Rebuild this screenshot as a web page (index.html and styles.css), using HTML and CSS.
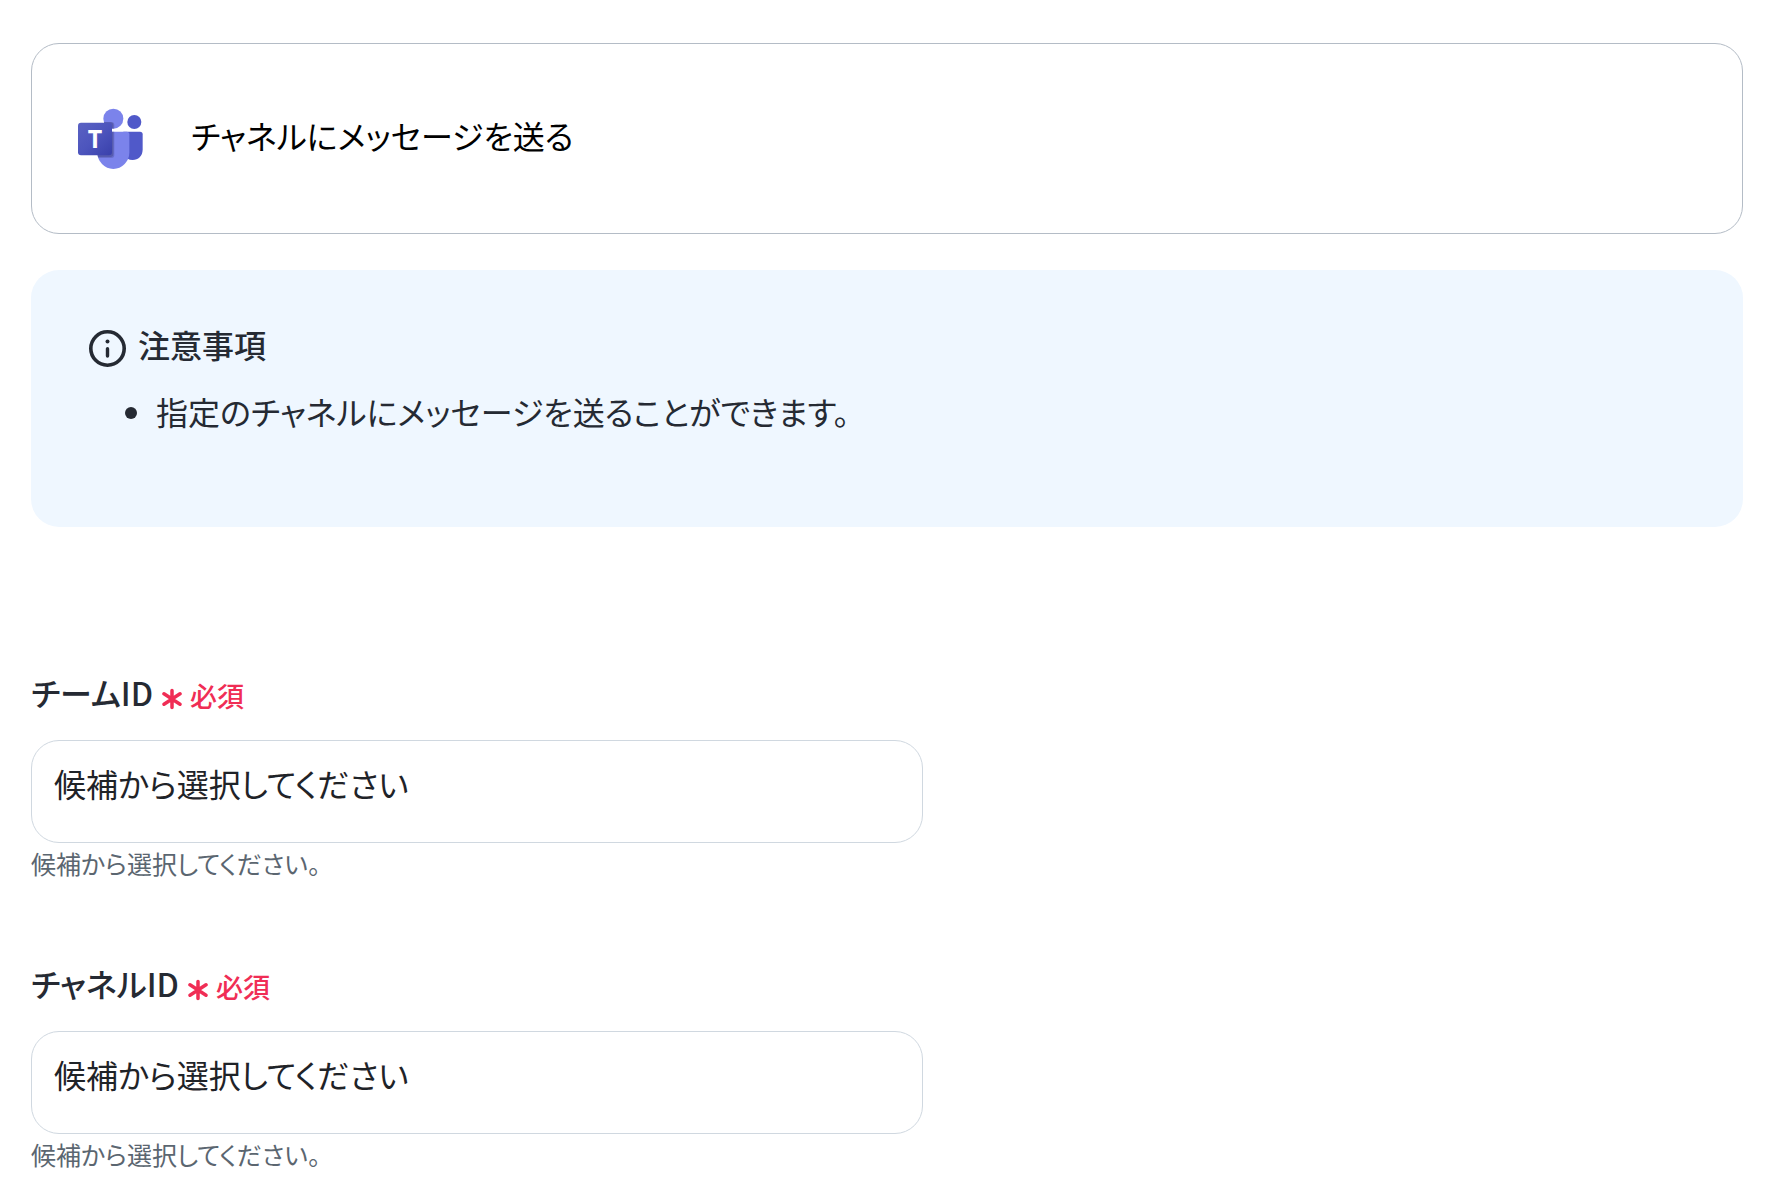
FILE: index.html
```html
<!DOCTYPE html>
<html lang="ja">
<head>
<meta charset="utf-8">
<meta name="viewport" content="width=device-width, initial-scale=1">
<title>チャネルにメッセージを送る</title>
<link rel="stylesheet" href="styles.css">
</head>
<body>
<main class="page">
  <header class="card">
    <svg class="card-logo" viewBox="24 24 198 186" role="img" aria-label="Microsoft Teams">
      <defs>
        <linearGradient id="tile" x1="0" y1="0" x2="1" y2="1">
          <stop offset="0" stop-color="#5a62c3"/>
          <stop offset="0.5" stop-color="#4d55bd"/>
          <stop offset="1" stop-color="#3940ab"/>
        </linearGradient>
        <clipPath id="figure">
          <circle cx="130" cy="56" r="30"/>
          <path d="M88 95H170q8 0 8 8v54a48 50 0 0 1-96 0V95z"/>
        </clipPath>
      </defs>
      <circle cx="193" cy="66" r="21" fill="#5059c9"/>
      <path d="M160 95h50q8 0 8 8v45c0 22-14 32-30 32-12 0-20-5-28-15z" fill="#5059c9"/>
      <circle cx="130" cy="56" r="30" fill="#7b83eb"/>
      <path d="M88 95H170q8 0 8 8v54a48 50 0 0 1-96 0V95z" fill="#7b83eb"/>
      <g clip-path="url(#figure)">
        <rect x="30" y="66" width="103" height="108" rx="9" fill="#444791" opacity=".35"/>
        <rect x="30" y="67" width="100" height="104" rx="9" fill="#444791" opacity=".5"/>
      </g>
      <rect x="24" y="68" width="102" height="98" rx="9" fill="url(#tile)"/>
      <text class="logo-letter" x="75" y="144" text-anchor="middle">T</text>
    </svg>
    <h1 class="card-title">チャネルにメッセージを送る</h1>
  </header>

  <section class="notice" aria-labelledby="notice-title">
    <div class="notice-head">
      <svg class="notice-icon" viewBox="0 0 37 37" aria-hidden="true">
        <circle cx="18.5" cy="18.5" r="16.7" fill="none" stroke="currentColor" stroke-width="3.6"/>
        <circle cx="18.5" cy="11.500" r="2" fill="currentColor"/>
        <path d="M18.5 18.8v7.2" stroke="currentColor" stroke-width="3.4" stroke-linecap="round"/>
      </svg>
      <h2 class="notice-title" id="notice-title">注意事項</h2>
    </div>
    <ul class="notice-list">
      <li>指定のチャネルにメッセージを送ることができます。</li>
    </ul>
  </section>

  <form class="form">
    <div class="field">
      <label class="label" for="team">チームID
        <span class="required"><svg class="asterisk" viewBox="0 0 20 22" aria-hidden="true"><path d="M10 2.400v17.200M2 5.800l16 10.400M18 5.800l-16 10.400"/></svg>必須</span>
      </label>
      <select class="select" id="team" aria-describedby="team-help" required>
        <option value="">候補から選択してください</option>
      </select>
      <p class="help" id="team-help">候補から選択してください。</p>
    </div>
    <div class="field">
      <label class="label" for="channel">チャネルID
        <span class="required"><svg class="asterisk" viewBox="0 0 20 22" aria-hidden="true"><path d="M10 2.400v17.200M2 5.800l16 10.400M18 5.800l-16 10.400"/></svg>必須</span>
      </label>
      <select class="select" id="channel" aria-describedby="channel-help" required>
        <option value="">候補から選択してください</option>
      </select>
      <p class="help" id="channel-help">候補から選択してください。</p>
    </div>
  </form>
</main>
</body>
</html>
```
FILE: styles.css
```css
* {
  box-sizing: border-box;
}

body {
  margin: 0;
  background: #fff;
  color: #252a33;
  font-family: "Noto Sans CJK JP", sans-serif;
  font-size: 32px;
  line-height: 48px;
  font-feature-settings: "palt";
}

h1,
h2,
p,
ul {
  margin: 0;
  font-size: inherit;
  font-weight: 400;
}

.page {
  padding: 43px 47px 0 31px;
}

.card {
  display: flex;
  align-items: center;
  gap: 47px;
  padding: 64px 46px 63px;
  border: 1px solid #b4bcc6;
  border-radius: 28px;
}

.card-logo {
  width: 66px;
  height: 62px;
}

.logo-letter {
  fill: #fff;
  font-family: "Open Sans", sans-serif;
  font-size: 75px;
  font-weight: 700;
}

.card-title {
  padding-bottom: 8px;
  color: #000;
}

.notice {
  margin-top: 36px;
  padding: 54px 58px 92px;
  border-radius: 28px;
  background: #eff7ff;
}

.notice-head {
  display: flex;
  align-items: center;
  gap: 12px;
}

.notice-icon {
  width: 37px;
  height: 37px;
}

.notice-title {
  padding-bottom: 8px;
  font-weight: 500;
  line-height: 40px;
}

.notice-list {
  margin-top: 15px;
  padding-left: 67px;
}

.form {
  display: flex;
  flex-direction: column;
  gap: 72px;
  margin-top: 137px;
}

.label {
  display: flex;
  align-items: center;
  gap: 9px;
  font-weight: 500;
}

.required {
  display: flex;
  align-items: center;
  gap: 8px;
  padding-top: 8px;
  color: #f02d55;
  font-size: 27px;
}

.asterisk {
  width: 20px;
  height: 22px;
  margin-top: 6px;
  fill: none;
  stroke: currentColor;
  stroke-width: 3.5;
  stroke-linecap: round;
}

.select {
  display: block;
  width: 100%;
  max-width: 892px;
  height: 103px;
  margin-top: 20px;
  padding: 0 22px 18px;
  border: 1px solid #d0d8e0;
  border-radius: 28px;
  background: #fff;
  color: #1f2328;
  font: inherit;
  font-feature-settings: inherit;
  appearance: none;
}

.help {
  color: #5b6670;
  font-size: 25px;
  line-height: 40px;
}
```
